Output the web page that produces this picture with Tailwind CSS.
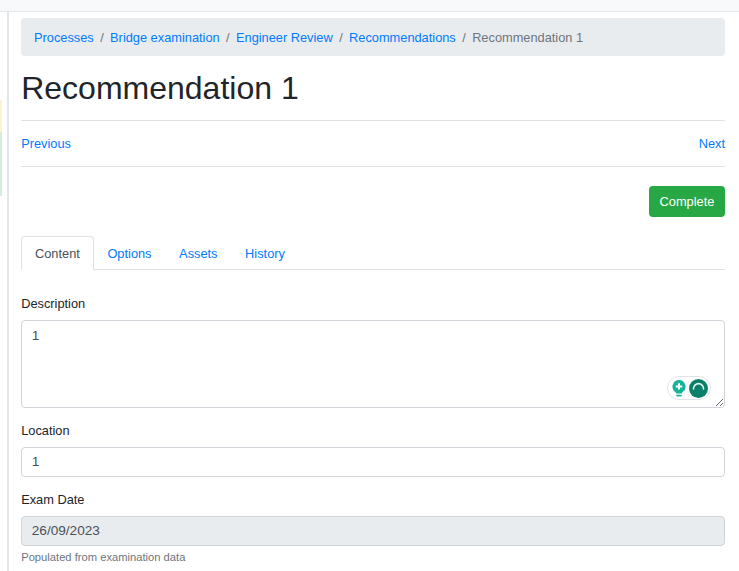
<!DOCTYPE html>
<html lang="en">
  <head>
    <meta charset="UTF-8" />
    <title>Recommendation 1</title>
    <script src="https://cdn.jsdelivr.net/npm/@tailwindcss/browser@4"></script>
  </head>
  <body class="h-[571px] overflow-hidden bg-white font-['Liberation_Sans',Arial,sans-serif] text-[12.8px] text-[#212529]">
    <div class="h-[12px] bg-[#f8f9fa] border-b border-[#e3e5e8]"></div>
    <div class="flex h-[559px]">
      <!-- sidebar edge -->
      <aside class="w-[9px] shrink-0 border-r-2 border-[#e3e5e8] bg-white flex flex-col">
        <div class="h-[88px]"></div>
        <div class="h-[32px] w-[2px] bg-[#fff3cd]"></div>
        <div class="h-[64px] w-[2px] bg-[#d4edda]"></div>
      </aside>
      <main class="w-[703.8px] ml-[12.2px] pt-[6px]">
        <nav class="h-[38px] rounded bg-[#e9ecef] px-[12.8px] pt-[1px] flex items-center">
          <a href="#" class="text-[#007bff]">Processes</a>
          <span class="px-[6.4px] text-[#6c757d]">/</span>
          <a href="#" class="text-[#007bff]">Bridge examination</a>
          <span class="px-[6.4px] text-[#6c757d]">/</span>
          <a href="#" class="text-[#007bff]">Engineer Review</a>
          <span class="px-[6.4px] text-[#6c757d]">/</span>
          <a href="#" class="text-[#007bff]">Recommendations</a>
          <span class="px-[6.4px] text-[#6c757d]">/</span>
          <span class="text-[#6c757d]">Recommendation 1</span>
        </nav>
        <h1 class="text-[32px] leading-[39px] mt-[13px] font-normal">Recommendation 1</h1>
        <div class="mt-[12px] h-[47px] border-y border-[#dee2e6] flex items-center justify-between text-[#007bff]">
          <a href="#">Previous</a>
          <a href="#">Next</a>
        </div>
        <div class="flex justify-end mt-[19px]">
          <button class="h-[31px] w-[76px] rounded bg-[#28a745] text-white">Complete</button>
        </div>
        <div class="flex mt-[19px] h-[34px] border-b border-[#dee2e6]">
          <a href="#" class="h-[34px] px-[12.8px] pt-[1px] flex items-center rounded-t border border-[#dee2e6] border-b-white bg-white text-[#495057]">Content</a>
          <a href="#" class="h-[34px] px-[12.8px] pt-[1px] flex items-center border border-transparent text-[#007bff]">Options</a>
          <a href="#" class="h-[34px] px-[12.8px] pt-[1px] flex items-center border border-transparent text-[#007bff]">Assets</a>
          <a href="#" class="h-[34px] px-[12.8px] pt-[1px] flex items-center border border-transparent text-[#007bff]">History</a>
        </div>
        <label class="block mt-[26px] leading-[15px]">Description</label>
        <div class="relative mt-[9px] h-[88px]">
          <textarea class="block h-[88px] w-full rounded border border-[#ced4da] px-[9.6px] py-[6px] text-[13.6px] leading-[18px] text-[#495057] resize-y">1</textarea>
          <!-- grammar extension badge -->
          <div class="absolute right-[14px] bottom-[8px] h-[24px] w-[44px] rounded-full border border-[#e0e4e8] bg-white flex items-center pl-[4px] gap-[3px]">
            <svg width="14" height="17" viewBox="0 0 14 17">
              <path d="M7 0a6.6 6.6 0 0 0-3.7 12c.5.4.8.9.9 1.4h5.6c.1-.5.4-1 .9-1.4A6.6 6.6 0 0 0 7 0z" fill="#14b39a" />
              <path d="M7 3.2v6.4M3.8 6.4h6.4" stroke="#fff" stroke-width="2" />
              <path d="M5 15.6h4" stroke="#14b39a" stroke-width="1.6" stroke-linecap="round" />
            </svg>
            <svg width="19" height="19" viewBox="0 0 19 19">
              <circle cx="9.5" cy="9.5" r="9.5" fill="#0b8069" />
              <path d="M4.5 10V9.6a5 5 0 0 1 10 0v.4" fill="none" stroke="#e6f5f1" stroke-width="1.6" stroke-linecap="round" />
            </svg>
          </div>
        </div>
        <label class="block mt-[15px] leading-[15px]">Location</label>
        <input value="1" class="block mt-[9px] h-[30px] w-full rounded border border-[#ced4da] px-[9.6px] pb-[2px] text-[13.6px] text-[#495057]" />
        <label class="block mt-[15px] leading-[15px]">Exam Date</label>
        <input value="26/09/2023" disabled class="block mt-[9px] h-[30px] w-full rounded border border-[#ced4da] bg-[#e9ecef] px-[9.6px] pb-[2px] text-[13.6px] text-[#495057]" />
        <p class="mt-[4px] text-[11.2px] leading-[14px] text-[#6c757d]">Populated from examination data</p>
      </main>
    </div>
  </body>
</html>
